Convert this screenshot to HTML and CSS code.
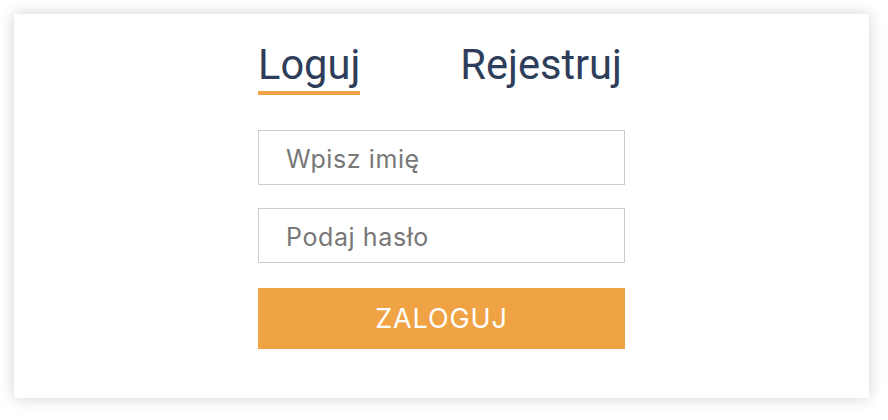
FILE: index.html
```html
<!DOCTYPE html>
<html lang="pl">
<head>
<meta charset="utf-8">
<title>Loguj</title>
<link rel="stylesheet" href="styles.css">
</head>
<body>
<div class="card">
  <div class="form">
    <div class="tabs">
      <span class="tab active">Loguj</span>
      <span class="tab">Rejestruj</span>
    </div>
    <input class="field first" type="text" placeholder="Wpisz imię">
    <input class="field second" type="password" placeholder="Podaj hasło">
    <button class="submit" type="button">ZALOGUJ</button>
  </div>
</div>
</body>
</html>
```

FILE: styles.css
```css
html, body {
  margin: 0;
  padding: 0;
  background: #fff;
}
body {
  padding: 14px 19px 22px 14px;
  font-family: Roboto, "Liberation Sans", sans-serif;
}
.card {
  height: 384px;
  background: #fff;
  box-shadow: 0 0 14px rgba(0, 0, 0, 0.18);
  display: flex;
  justify-content: center;
}
.form {
  width: 367px;
  padding-top: 27px;
  display: flex;
  flex-direction: column;
}
.tabs {
  display: flex;
  justify-content: space-between;
  align-items: flex-start;
  padding: 0 3px 0 0;
}
.tab {
  font-size: 41.6px;
  line-height: 48px;
  color: #2e3d59;
  padding-bottom: 2px;
  border-bottom: 4px solid transparent;
}
.tab.active {
  border-bottom-color: #f0a344;
}
.field {
  box-sizing: border-box;
  height: 55px;
  width: 100%;
  border: 1px solid #cccccc;
  padding: 3px 0 0 27px;
  margin: 0;
  font-family: Inter, "Open Sans", sans-serif;
  font-size: 25px;
  font-weight: 400;
  letter-spacing: 0.6px;
  color: #333;
  outline: none;
}
.field::placeholder {
  color: #777777;
}
.first { margin-top: 35px; }
.second { margin-top: 23px; }
.submit {
  margin-top: 25px;
  height: 61px;
  width: 100%;
  border: none;
  background: #f0a344;
  color: #fff;
  font-family: Inter, "Open Sans", sans-serif;
  font-size: 27px;
  font-weight: 400;
  letter-spacing: 0.9px;
  padding: 0;
}
```
